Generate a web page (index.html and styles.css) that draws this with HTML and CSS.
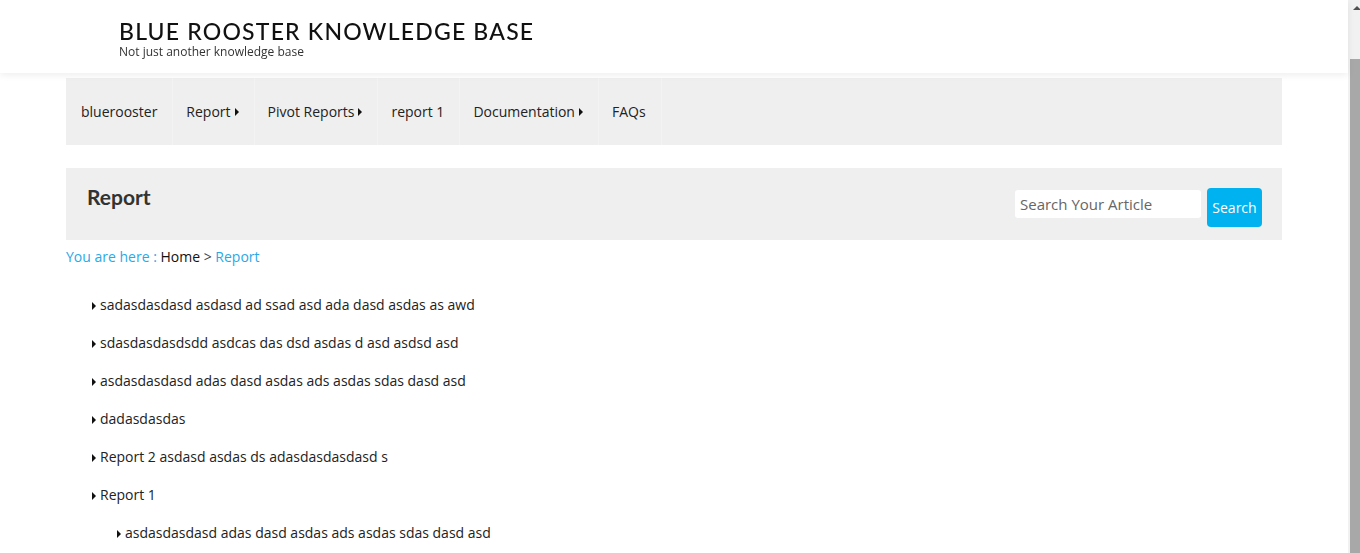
FILE: index.html
```html
<!DOCTYPE html>
<html lang="en">
<head>
<meta charset="utf-8">
<title>Blue Rooster Knowledge Base</title>
<link rel="stylesheet" href="styles.css">
</head>
<body>
<div class="page">
  <header class="site-header">
    <div class="brand">
      <h1 class="brand-title">BLUE ROOSTER KNOWLEDGE BASE</h1>
      <p class="brand-tagline">Not just another knowledge base</p>
    </div>
  </header>
  <div class="container">
    <nav class="main-nav">
      <a class="nav-item" href="#">bluerooster</a>
      <a class="nav-item" href="#">Report<span class="caret"></span></a>
      <a class="nav-item" href="#">Pivot Reports<span class="caret"></span></a>
      <a class="nav-item" href="#">report 1</a>
      <a class="nav-item" href="#">Documentation<span class="caret"></span></a>
      <a class="nav-item" href="#">FAQs</a>
    </nav>
    <section class="page-head">
      <h2 class="page-title">Report</h2>
      <form class="search">
        <input class="search-input" type="text" placeholder="Search Your Article">
        <button class="search-btn" type="button">Search</button>
      </form>
    </section>
    <div class="breadcrumb">
      <span class="bc-label">You are here :</span> <span class="bc-home">Home</span> <span class="bc-sep">&gt;</span> <span class="bc-current">Report</span>
    </div>
    <ul class="articles">
      <li class="article"><span class="caret"></span>sadasdasdasd asdasd ad ssad asd ada dasd asdas as awd</li>
      <li class="article"><span class="caret"></span>sdasdasdasdsdd asdcas das dsd asdas d asd asdsd asd</li>
      <li class="article"><span class="caret"></span>asdasdasdasd adas dasd asdas ads asdas sdas dasd asd</li>
      <li class="article"><span class="caret"></span>dadasdasdas</li>
      <li class="article"><span class="caret"></span>Report 2 asdasd asdas ds adasdasdasdasd s</li>
      <li class="article"><span class="caret"></span>Report 1</li>
      <li class="article sub"><span class="caret"></span>asdasdasdasd adas dasd asdas ads asdas sdas dasd asd</li>
    </ul>
  </div>
</div>
<div class="scrollbar" aria-hidden="true">
  <span class="scroll-arrow"></span>
  <span class="scroll-thumb"></span>
</div>
</body>
</html>
```
FILE: styles.css
```css
body {
  margin: 0;
  font-family: "Open Sans", "Liberation Sans", sans-serif;
  color: #222;
  background: #fff;
  overflow: hidden;
}
.page {
  margin-right: 12px;
}
.site-header {
  height: 73px;
  background: #fff;
  box-shadow: 0 2px 7px rgba(0,0,0,0.07);
  position: relative;
  z-index: 2;
}
.brand {
  padding: 18px 0 0 119px;
}
.brand-title {
  margin: 0;
  font-family: "Lato", sans-serif;
  font-weight: 500;
  font-size: 23px;
  letter-spacing: 1.2px;
  line-height: 26px;
  color: #111;
}
.brand-tagline {
  margin: 0;
  font-size: 12px;
  line-height: 15px;
  color: #333;
}
.container {
  width: 1216px;
  margin: 5px auto 0;
}
.main-nav {
  display: flex;
  height: 67px;
  background: #efefef;
  align-items: stretch;
}
.nav-item {
  display: flex;
  align-items: center;
  padding: 0 15px 0 13px;
  font-size: 14px;
  color: #222;
  text-decoration: none;
  border-left: 1px solid #f3f3f3;
}
.nav-item:first-child {
  padding-left: 15px;
  border-left: none;
}
.nav-item:last-child {
  border-right: 1px solid #f3f3f3;
}
.caret {
  display: inline-block;
  width: 0;
  height: 0;
  border-top: 4px solid transparent;
  border-bottom: 4px solid transparent;
  border-left: 4px solid #111;
  margin-left: 4px;
}
.page-head {
  margin-top: 23px;
  height: 72px;
  background: #efefef;
  display: flex;
  justify-content: space-between;
  align-items: flex-start;
  padding: 0 20px 0 21px;
}
.page-title {
  margin: 16px 0 0;
  font-family: "Lato", sans-serif;
  font-weight: 700;
  font-size: 21px;
  color: #333;
}
.search {
  display: flex;
  gap: 6px;
  margin-top: 20px;
}
.search-input {
  width: 186px;
  height: 28px;
  box-sizing: border-box;
  border: none;
  border-radius: 3px;
  padding: 0 5px;
  margin-top: 2px;
  font-family: "Open Sans", sans-serif;
  font-size: 15px;
  background: #fff;
}
.search-input::placeholder {
  color: #666;
}
.search-btn {
  width: 55px;
  height: 39px;
  border: none;
  border-radius: 4px;
  background: #00b2f0;
  color: #fff;
  font-family: "Open Sans", sans-serif;
  font-size: 14px;
  padding: 0;
}
.breadcrumb {
  margin-top: 7px;
  font-size: 14px;
  line-height: 20px;
}
.bc-label, .bc-current {
  color: #2aa9e8;
}
.bc-home {
  color: #111;
}
.bc-sep {
  color: #444;
}
.articles {
  list-style: none;
  margin: 28px 0 0;
  padding: 0 0 0 26px;
}
.article {
  font-size: 14px;
  line-height: 20px;
  height: 38px;
  color: #222;
}
.article .caret {
  margin: 0 4px 0 0;
}
.article.sub {
  padding-left: 25px;
}
.scrollbar {
  position: fixed;
  top: 0;
  right: 0;
  bottom: 0;
  width: 12px;
  background: #f1f1f1;
}
.scroll-arrow {
  position: absolute;
  top: 6px;
  left: 5px;
  width: 0;
  height: 0;
  border-left: 4px solid transparent;
  border-right: 4px solid transparent;
  border-bottom: 4px solid #505050;
}
.scroll-thumb {
  position: absolute;
  top: 59px;
  left: 2px;
  right: 0;
  bottom: 0;
  background: #a8a8a8;
}
```
